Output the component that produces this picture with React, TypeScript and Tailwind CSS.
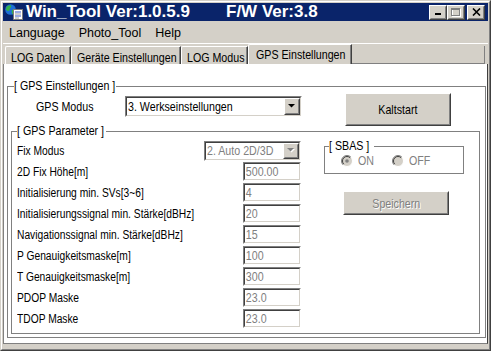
import React from "react";

const N = "inline-block font-['Liberation_Sans',Arial,sans-serif] origin-left scale-x-[0.82] whitespace-nowrap";
const NC = "inline-block font-['Liberation_Sans',Arial,sans-serif] origin-center scale-x-[0.82] whitespace-nowrap";

function Raised({
  className = "",
  children,
}: {
  className?: string;
  children?: React.ReactNode;
}) {
  return (
    <div
      className={`border border-t-white border-l-white border-b-[#404040] border-r-[#404040] bg-[#d4d0c8] shrink-0 ${className}`}
    >
      <div className="w-full h-full border border-t-[#d4d0c8] border-l-[#d4d0c8] border-b-[#808080] border-r-[#808080] flex items-center justify-center">
        {children}
      </div>
    </div>
  );
}

function Sunken({
  className = "",
  children,
}: {
  className?: string;
  children?: React.ReactNode;
}) {
  return (
    <div
      className={`border border-t-[#808080] border-l-[#808080] border-b-white border-r-white shrink-0 ${className}`}
    >
      <div className="w-full h-full border border-t-[#404040] border-l-[#404040] border-b-[#d4d0c8] border-r-[#d4d0c8] bg-white flex items-center overflow-hidden">
        {children}
      </div>
    </div>
  );
}

function Arrow({ disabled }: { disabled?: boolean }) {
  return (
    <svg width="8" height="5" viewBox="0 0 8 5">
      {disabled && <polygon points="1,1 8,1 4.5,4.5" fill="#fff" />}
      <polygon points="0,0 7,0 3.5,3.5" fill={disabled ? "#808080" : "#000"} />
    </svg>
  );
}

function Radio({ checked }: { checked?: boolean }) {
  return (
    <svg width="12" height="12" viewBox="0 0 12 12" className="shrink-0">
      <circle cx="6" cy="6" r="5.5" fill="#d4d0c8" />
      <path d="M2.1 9.9 A5.5 5.5 0 0 1 9.9 2.1" fill="none" stroke="#808080" strokeWidth="1" />
      <path d="M2.8 9.2 A4.5 4.5 0 0 1 9.2 2.8" fill="none" stroke="#404040" strokeWidth="1" />
      <path d="M9.9 2.1 A5.5 5.5 0 0 1 2.1 9.9" fill="none" stroke="#ffffff" strokeWidth="1" />
      {checked && <circle cx="6" cy="6" r="1.8" fill="#808080" />}
    </svg>
  );
}

function TitleIcon() {
  return (
    <svg width="18" height="16" viewBox="0 0 18 16" className="ml-[2px] shrink-0">
      <circle cx="5.5" cy="5.5" r="5.3" fill="#1d6fd6" />
      <path d="M1.3 3.5 C2.5 1.2 4.8 0.6 6.2 1.6 C6.6 3.6 4.6 4.2 4.4 6.2 C3.4 7.6 2 6.8 0.9 5.8 Z" fill="#35b04a" />
      <path d="M6.8 6.2 C8 5.4 9.8 5.6 10.4 6.6 C10 8.4 8.8 9.6 7.6 10.4 C6.8 9.2 6.6 7.6 6.8 6.2 Z" fill="#35b04a" />
      <rect x="8.5" y="5.5" width="9" height="10" fill="#ffffff" stroke="#7a7a7a" />
      <rect x="10" y="7.5" width="6" height="1" fill="#3656c8" />
      <rect x="10" y="9.5" width="6" height="1" fill="#9a9a9a" />
      <rect x="10" y="11.5" width="6" height="1" fill="#3656c8" />
      <rect x="10" y="13.5" width="4" height="1" fill="#9a9a9a" />
    </svg>
  );
}

function Tab({
  label,
  className = "",
  selected,
}: {
  label: string;
  className?: string;
  selected?: boolean;
}) {
  return (
    <div
      className={`rounded-tl-[2px] border-t border-l border-r border-t-white border-l-white border-r-[#404040] bg-[#d4d0c8] shrink-0 ${
        selected ? "h-[20px]" : "h-[18px]"
      } ${className}`}
    >
      <div
        className={`h-full flex items-start border-r border-r-[#808080] ${
          selected ? "pl-[7px] pt-[2px]" : "pl-[5px] pt-[3px]"
        }`}
      >
        <span className={`${N} text-[13px] leading-[15px] text-black`}>{label}</span>
      </div>
    </div>
  );
}

function Row({ label, children }: { label: string; children: React.ReactNode }) {
  return (
    <div className="h-[21px] flex items-center justify-between">
      <span className={`${N} text-[12.5px] leading-[15px] text-black pt-[1px]`}>{label}</span>
      {children}
    </div>
  );
}

function Field({ value }: { value: string }) {
  return (
    <Sunken className="w-[58px] h-[19px]">
      <span className={`pl-[1px] ${N} text-[13px] leading-[15px] text-[#808080]`}>{value}</span>
    </Sunken>
  );
}

export default function App() {
  return (
    <div className="w-[491px] h-[351px] overflow-hidden bg-[#d4d0c8] font-['Liberation_Sans',Arial,sans-serif] select-none">
      <div className="w-full h-full border border-t-[#d4d0c8] border-l-[#d4d0c8] border-b-[#404040] border-r-[#404040]">
        <div className="w-full h-full border border-t-white border-l-white border-b-[#808080] border-r-[#808080] p-px flex flex-col">
          {/* Title bar */}
          <div className="h-[18px] bg-[#0a246a] flex items-center shrink-0">
            <TitleIcon />
            <span className="ml-[3px] w-[200px] text-white font-bold text-[17px] leading-[18px] whitespace-nowrap">
              Win_Tool Ver:1.0.5.9
            </span>
            <span className="text-white font-bold text-[17px] leading-[18px] whitespace-nowrap">
              F/W Ver:3.8
            </span>
            <div className="ml-auto flex items-center pr-[3px]">
              <Raised className="w-[18px] h-[15px]">
                <svg width="8" height="8" viewBox="0 0 8 8">
                  <rect x="1" y="5" width="6" height="2" fill="#000" />
                </svg>
              </Raised>
              <Raised className="w-[18px] h-[15px]">
                <svg width="10" height="9" viewBox="0 0 10 9">
                  <rect x="1.5" y="1.5" width="8" height="7" fill="none" stroke="#fff" />
                  <rect x="0.5" y="0.5" width="8" height="7" fill="none" stroke="#808080" />
                  <rect x="0" y="0" width="9" height="2" fill="#808080" />
                </svg>
              </Raised>
              <Raised className="ml-[2px] w-[18px] h-[15px]">
                <svg width="9" height="8" viewBox="0 0 9 8">
                  <path d="M1 0.5 L8 7.5 M8 0.5 L1 7.5" stroke="#000" strokeWidth="1.6" />
                </svg>
              </Raised>
            </div>
          </div>

          {/* Menu bar */}
          <div className="h-[22px] flex items-center gap-[14px] pl-[6px] pt-[2px] text-[12.5px] leading-[15px] text-black shrink-0">
            <span>Language</span>
            <span>Photo_Tool</span>
            <span>Help</span>
          </div>
          <div className="h-px bg-white shrink-0" />

          {/* Tabs */}
          <div className="h-[20px] flex items-end pl-[2px] shrink-0">
            <Tab label="LOG Daten" className="w-[66px]" />
            <Tab label="Geräte Einstellungen" className="w-[110px]" />
            <Tab label="LOG Modus" className="w-[67px]" />
            <Tab label="GPS Einstellungen" className="w-[104px]" selected />
            <div className="flex-1 h-[18px] mr-[3px] border-b border-r border-b-[#808080] border-r-[#808080]" />
          </div>

          {/* Panel */}
          <div className="h-[280px] shrink-0 bg-white border-l border-r border-b border-l-[#808080] border-r-[#404040] border-b-[#808080]">
            <fieldset className="ml-[3px] mt-[15px] w-[479px] h-[259px] border border-[#808080] p-0 m-0 min-w-0">
              <legend className="ml-[6px] w-[102px] h-[14px] overflow-visible whitespace-nowrap">
                <span className={`${N} text-[13px] leading-[14px] text-black align-top`}>[ GPS Einstellungen ]</span>
              </legend>

              <div className="flex items-start h-[31px]">
                <div className="w-[117px] pl-[28px] pt-[7px] flex items-start">
                  <span className={`${N} text-[13px] leading-[14px] text-black`}>GPS Modus</span>
                </div>
                <div className="mt-[3px]">
                  <Sunken className="w-[177px] h-[21px]">
                    <div className="flex-1 min-w-0 pl-[1px] flex items-center">
                      <span className={`${N} text-[13px] leading-[15px] text-black`}>3. Werkseinstellungen</span>
                    </div>
                    <Raised className="w-[16px] h-full">
                      <Arrow />
                    </Raised>
                  </Sunken>
                </div>
                <Raised className="ml-[43px] w-[106px] h-[33px]">
                  <span className={`${NC} text-[13px] leading-[15px] text-black`}>Kaltstart</span>
                </Raised>
              </div>

              <fieldset className="ml-[3px] w-[469px] h-[210px] border border-[#808080] p-0 m-0 min-w-0">
                <legend className="ml-[5px] w-[89px] h-[14px] overflow-visible whitespace-nowrap">
                  <span className={`${N} text-[13px] leading-[14px] text-black align-top`}>[ GPS Parameter ]</span>
                </legend>
                <div className="flex">
                  <div className="w-[289px] pl-[5px] pt-[2px] flex flex-col">
                    <Row label="Fix Modus">
                      <Sunken className="w-[97px] h-[20px]">
                        <div className="flex-1 min-w-0 pl-[1px] flex items-center">
                          <span className={`${N} text-[13px] leading-[15px] text-[#808080]`}>2. Auto 2D/3D</span>
                        </div>
                        <Raised className="w-[16px] h-full">
                          <Arrow disabled />
                        </Raised>
                      </Sunken>
                    </Row>
                    <Row label="2D Fix Höhe[m]">
                      <Field value="500.00" />
                    </Row>
                    <Row label="Initialisierung min. SVs[3~6]">
                      <Field value="4" />
                    </Row>
                    <Row label="Initialisierungssignal min. Stärke[dBHz]">
                      <Field value="20" />
                    </Row>
                    <Row label="Navigationssignal min. Stärke[dBHz]">
                      <Field value="15" />
                    </Row>
                    <Row label="P Genauigkeitsmaske[m]">
                      <Field value="100" />
                    </Row>
                    <Row label="T Genauigkeitsmaske[m]">
                      <Field value="300" />
                    </Row>
                    <Row label="PDOP Maske">
                      <Field value="23.0" />
                    </Row>
                    <Row label="TDOP Maske">
                      <Field value="23.0" />
                    </Row>
                  </div>

                  <div className="ml-[23px] flex flex-col items-start">
                    <fieldset className="mt-[1px] w-[140px] h-[35px] border border-[#808080] p-0 m-0 min-w-0">
                      <legend className="ml-[4px] w-[45px] h-[14px] overflow-visible whitespace-nowrap">
                        <span className={`${N} text-[13px] leading-[14px] text-black align-top`}>[ SBAS ]</span>
                      </legend>
                      <div className="h-[15px] flex items-center text-[13px] leading-[15px] text-[#808080] [text-shadow:1px_1px_0_#fff]">
                        <span className="ml-[16px] flex">
                          <Radio checked />
                        </span>
                        <span className="ml-[5px] w-[34px] flex">
                          <span className={N}>ON</span>
                        </span>
                        <Radio />
                        <span className="ml-[5px] flex">
                          <span className={N}>OFF</span>
                        </span>
                      </div>
                    </fieldset>
                    <Raised className="ml-[19px] mt-[17px] w-[106px] h-[24px]">
                      <span className={`${NC} text-[13px] leading-[15px] text-[#808080] [text-shadow:1px_1px_0_#fff]`}>
                        Speichern
                      </span>
                    </Raised>
                  </div>
                </div>
              </fieldset>
            </fieldset>
          </div>
        </div>
      </div>
    </div>
  );
}
